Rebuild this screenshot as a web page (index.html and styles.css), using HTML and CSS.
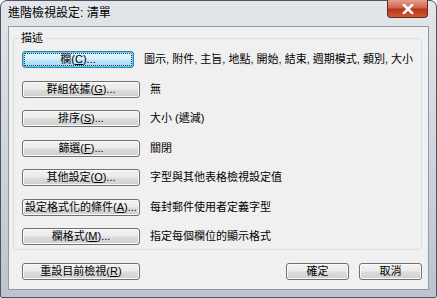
FILE: index.html
```html
<!DOCTYPE html>
<html lang="zh-Hant">
<head>
  <meta charset="UTF-8">
  <title>進階檢視設定: 清單</title>
  <link rel="stylesheet" href="styles.css">
</head>
<body>

<div class="window">
  <div class="titlebar">
    <span class="title">進階檢視設定: 清單</span>
    <button class="close-btn" aria-label="關閉">
      <svg width="12" height="10" viewBox="0 0 12 10">
        <path d="M2 1 L10 9 M10 1 L2 9" stroke="#fff" stroke-width="2.6" stroke-linecap="square"/>
      </svg>
    </button>
  </div>

  <div class="client">
    <div class="group">
      <span class="group-label">描述</span>
      <div class="row">
        <button class="btn default">欄(<u>C</u>)...</button>
        <span class="desc">圖示, 附件, 主旨, 地點, 開始, 結束, 週期模式, 類別, 大小</span>
      </div>
      <div class="row">
        <button class="btn">群組依據(<u>G</u>)...</button>
        <span class="desc">無</span>
      </div>
      <div class="row">
        <button class="btn">排序(<u>S</u>)...</button>
        <span class="desc">大小 (遞減)</span>
      </div>
      <div class="row">
        <button class="btn">篩選(<u>F</u>)...</button>
        <span class="desc">關閉</span>
      </div>
      <div class="row">
        <button class="btn">其他設定(<u>O</u>)...</button>
        <span class="desc">字型與其他表格檢視設定值</span>
      </div>
      <div class="row">
        <button class="btn">設定格式化的條件(<u>A</u>)...</button>
        <span class="desc">每封郵件使用者定義字型</span>
      </div>
      <div class="row">
        <button class="btn">欄格式(<u>M</u>)...</button>
        <span class="desc">指定每個欄位的顯示格式</span>
      </div>
    </div>

    <div class="footer">
      <button class="btn">重設目前檢視(<u>R</u>)</button>
      <div class="spacer"></div>
      <button class="btn small">確定</button>
      <button class="btn small">取消</button>
    </div>
  </div>
</div>

</body>
</html>
```

FILE: styles.css
```css
body {
  margin: 0;
  font-family: "Liberation Sans", "Noto Sans CJK TC", sans-serif;
  font-size: 11px;
  color: #000;
  background: #fff;
}

.window {
  width: 437px;
  height: 298px;
  box-sizing: border-box;
  border: 1px solid #4a5560;
  border-radius: 7px 7px 2px 2px;
  background: linear-gradient(180deg, #e2e6ea 0%, #d3d9df 40%, #bcc4cc 100%);
  padding: 0 7px 7px 7px;
  display: flex;
  flex-direction: column;
}

.titlebar {
  height: 25px;
  display: flex;
  align-items: flex-start;
  position: relative;
}

.title {
  margin-top: 4px;
  line-height: 16px;
  font-size: 12px;
  color: #000;
}

.close-btn {
  position: absolute;
  right: 1px;
  top: -1px;
  width: 41px;
  height: 18px;
  border: 1px solid #6b2a1e;
  border-top: none;
  border-radius: 0 0 4px 4px;
  background: linear-gradient(180deg, #e6a08f 0%, #d0654c 45%, #b83419 55%, #cf5a36 100%);
  display: flex;
  align-items: center;
  justify-content: center;
  padding: 0;
}

.client {
  flex: 1;
  background: #f0f0f0;
  border: 1px solid #8f9aa5;
  display: flex;
  flex-direction: column;
  padding: 0 6px 0 4px;
}

.group {
  margin-top: 11px;
  padding: 12px 8px 4px 8px;
  border: 1px solid #d5dfe5;
  border-radius: 3px;
  display: flex;
  flex-direction: column;
  gap: 12.5px;
  position: relative;
}

.group-label {
  position: absolute;
  left: 5px;
  top: -8px;
  padding: 0 2px;
  background: #f0f0f0;
  line-height: 14px;
}

.row {
  display: flex;
  align-items: center;
}

.btn {
  width: 118px;
  height: 17px;
  padding: 0;
  font-family: inherit;
  font-size: 11px;
  line-height: 15px;
  white-space: nowrap;
  color: #000;
  border: 1px solid #707070;
  border-radius: 3px;
  background: linear-gradient(180deg, #f2f2f2 0%, #ebebeb 49%, #dddddd 51%, #cfcfcf 100%);
  box-shadow: inset 0 0 0 1px #fbfbfb;
}

.btn.default {
  border-color: #3c7fb1;
  background: linear-gradient(180deg, #eaf6fd 0%, #d9f0fc 49%, #bee6fd 51%, #a7d9f5 100%);
  box-shadow: inset 0 0 0 1px #48d3f7;
  outline: 1px dotted #333;
  outline-offset: -3px;
}

.btn.small {
  width: 63px;
  margin-left: 10px;
}

.desc {
  margin-left: 10px;
  white-space: nowrap;
  line-height: 15px;
}

.footer {
  display: flex;
  align-items: center;
  margin-top: 13px;
  padding-left: 9px;
}

.spacer {
  flex: 1;
}
```
